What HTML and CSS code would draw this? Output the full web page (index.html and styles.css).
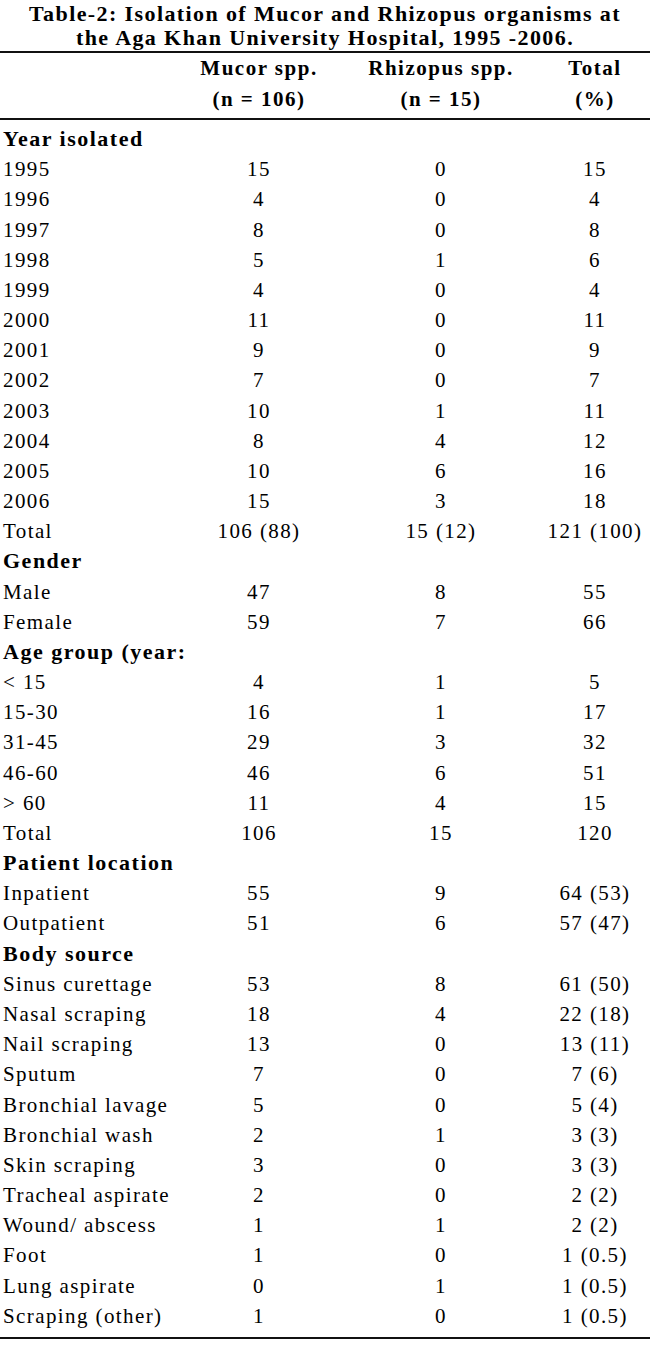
FILE: index.html
```html
<!DOCTYPE html>
<html lang="en">
<head>
<meta charset="utf-8">
<title>Table-2: Isolation of Mucor and Rhizopus organisms</title>
<link rel="stylesheet" href="styles.css">
</head>
<body>
<div class="sheet">
  <h1 class="title">Table-2: Isolation of Mucor and Rhizopus organisms at<br>the Aga Khan University Hospital, 1995 -2006.</h1>
  <div class="head">
    <div class="hrow"><span></span><span class="c2">Mucor spp.</span><span class="c3">Rhizopus spp.</span><span class="c4">Total</span></div>
    <div class="hrow"><span></span><span class="c2">(n = 106)</span><span class="c3">(n = 15)</span><span class="c4">(%)</span></div>
  </div>
  <div class="body">
    <div class="section">Year isolated</div>
    <div class="row"><span class="c1">1995</span><span class="c2">15</span><span class="c3">0</span><span class="c4">15</span></div>
    <div class="row"><span class="c1">1996</span><span class="c2">4</span><span class="c3">0</span><span class="c4">4</span></div>
    <div class="row"><span class="c1">1997</span><span class="c2">8</span><span class="c3">0</span><span class="c4">8</span></div>
    <div class="row"><span class="c1">1998</span><span class="c2">5</span><span class="c3">1</span><span class="c4">6</span></div>
    <div class="row"><span class="c1">1999</span><span class="c2">4</span><span class="c3">0</span><span class="c4">4</span></div>
    <div class="row"><span class="c1">2000</span><span class="c2">11</span><span class="c3">0</span><span class="c4">11</span></div>
    <div class="row"><span class="c1">2001</span><span class="c2">9</span><span class="c3">0</span><span class="c4">9</span></div>
    <div class="row"><span class="c1">2002</span><span class="c2">7</span><span class="c3">0</span><span class="c4">7</span></div>
    <div class="row"><span class="c1">2003</span><span class="c2">10</span><span class="c3">1</span><span class="c4">11</span></div>
    <div class="row"><span class="c1">2004</span><span class="c2">8</span><span class="c3">4</span><span class="c4">12</span></div>
    <div class="row"><span class="c1">2005</span><span class="c2">10</span><span class="c3">6</span><span class="c4">16</span></div>
    <div class="row"><span class="c1">2006</span><span class="c2">15</span><span class="c3">3</span><span class="c4">18</span></div>
    <div class="row"><span class="c1">Total</span><span class="c2">106 (88)</span><span class="c3">15 (12)</span><span class="c4">121 (100)</span></div>
    <div class="section">Gender</div>
    <div class="row"><span class="c1">Male</span><span class="c2">47</span><span class="c3">8</span><span class="c4">55</span></div>
    <div class="row"><span class="c1">Female</span><span class="c2">59</span><span class="c3">7</span><span class="c4">66</span></div>
    <div class="section">Age group (year:</div>
    <div class="row"><span class="c1">&lt; 15</span><span class="c2">4</span><span class="c3">1</span><span class="c4">5</span></div>
    <div class="row"><span class="c1">15-30</span><span class="c2">16</span><span class="c3">1</span><span class="c4">17</span></div>
    <div class="row"><span class="c1">31-45</span><span class="c2">29</span><span class="c3">3</span><span class="c4">32</span></div>
    <div class="row"><span class="c1">46-60</span><span class="c2">46</span><span class="c3">6</span><span class="c4">51</span></div>
    <div class="row"><span class="c1">&gt; 60</span><span class="c2">11</span><span class="c3">4</span><span class="c4">15</span></div>
    <div class="row"><span class="c1">Total</span><span class="c2">106</span><span class="c3">15</span><span class="c4">120</span></div>
    <div class="section">Patient location</div>
    <div class="row"><span class="c1">Inpatient</span><span class="c2">55</span><span class="c3">9</span><span class="c4">64 (53)</span></div>
    <div class="row"><span class="c1">Outpatient</span><span class="c2">51</span><span class="c3">6</span><span class="c4">57 (47)</span></div>
    <div class="section">Body source</div>
    <div class="row"><span class="c1">Sinus curettage</span><span class="c2">53</span><span class="c3">8</span><span class="c4">61 (50)</span></div>
    <div class="row"><span class="c1">Nasal scraping</span><span class="c2">18</span><span class="c3">4</span><span class="c4">22 (18)</span></div>
    <div class="row"><span class="c1">Nail scraping</span><span class="c2">13</span><span class="c3">0</span><span class="c4">13 (11)</span></div>
    <div class="row"><span class="c1">Sputum</span><span class="c2">7</span><span class="c3">0</span><span class="c4">7 (6)</span></div>
    <div class="row"><span class="c1">Bronchial lavage</span><span class="c2">5</span><span class="c3">0</span><span class="c4">5 (4)</span></div>
    <div class="row"><span class="c1">Bronchial wash</span><span class="c2">2</span><span class="c3">1</span><span class="c4">3 (3)</span></div>
    <div class="row"><span class="c1">Skin scraping</span><span class="c2">3</span><span class="c3">0</span><span class="c4">3 (3)</span></div>
    <div class="row"><span class="c1">Tracheal aspirate</span><span class="c2">2</span><span class="c3">0</span><span class="c4">2 (2)</span></div>
    <div class="row"><span class="c1">Wound/ abscess</span><span class="c2">1</span><span class="c3">1</span><span class="c4">2 (2)</span></div>
    <div class="row"><span class="c1">Foot</span><span class="c2">1</span><span class="c3">0</span><span class="c4">1 (0.5)</span></div>
    <div class="row"><span class="c1">Lung aspirate</span><span class="c2">0</span><span class="c3">1</span><span class="c4">1 (0.5)</span></div>
    <div class="row"><span class="c1">Scraping (other)</span><span class="c2">1</span><span class="c3">0</span><span class="c4">1 (0.5)</span></div>
  </div>
</div>
</body>
</html>
```

FILE: styles.css
```css
html, body {
  margin: 0;
  padding: 0;
  background: #fff;
}

.sheet {
  width: 650px;
  color: #000;
  font-family: "Liberation Serif", "Times New Roman", serif;
}

.title {
  margin: 0;
  height: 53px;
  padding-top: 2px;
  box-sizing: border-box;
  font-size: 22px;
  font-weight: bold;
  line-height: 24px;
  letter-spacing: 1.4px;
  text-align: center;
  border-bottom: 2px solid #111;
}

.head {
  box-sizing: border-box;
  height: 67px;
  padding-top: 0;
  border-bottom: 2px solid #111;
}

.hrow,
.row {
  display: grid;
  grid-template-columns: 190px 138px 212px 110px;
  align-items: center;
  white-space: nowrap;
}

.hrow {
  height: 31px;
  font-size: 21px;
  font-weight: bold;
  letter-spacing: 1.5px;
  line-height: 31px;
}

.body {
  padding-top: 4px;
  padding-bottom: 6px;
  border-bottom: 2px solid #111;
}

.row {
  height: 30.18px;
  line-height: 30.18px;
  font-size: 21px;
  letter-spacing: 1.4px;
}

.section {
  height: 30.18px;
  line-height: 30.18px;
  padding-left: 3px;
  font-size: 22px;
  font-weight: bold;
  letter-spacing: 1.5px;
  white-space: nowrap;
}

.c1 {
  padding-left: 3px;
}

.c2 {
  text-align: center;
}

.c3 {
  text-align: center;
  padding-left: 14px;
}

.c4 {
  text-align: center;
  padding: 0 5px;
}
```
